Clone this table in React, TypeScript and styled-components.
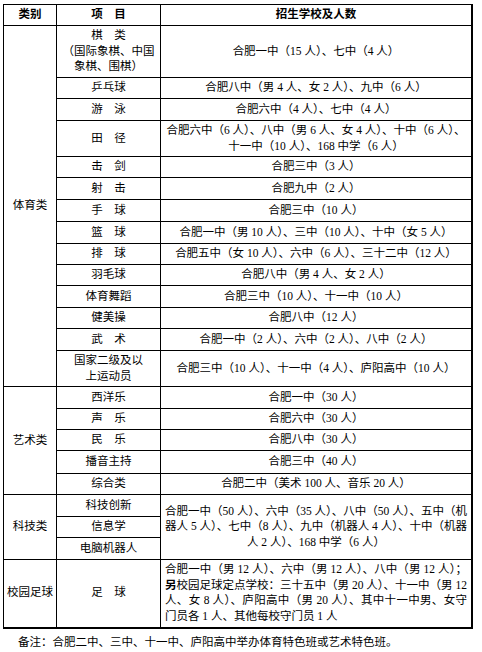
import React from "react"
import styled, { createGlobalStyle } from "styled-components"

const GlobalStyle = createGlobalStyle`
  html, body {
    margin: 0;
    background: #fff;
  }
  body {
    font-family: "Liberation Serif", "Noto Sans CJK SC", serif;
    color: #000;
  }
`

const Page = styled.div`
  padding: 4px 0 0 3px;
  width: 471px;
`

const Table = styled.table`
  width: 470px;
  table-layout: fixed;
  border-collapse: collapse;
  border-right: 2px solid #000;
  border-bottom: 2px solid #000;
  font-size: 11.5px;
  line-height: 15.6px;
`

const Row = styled.tr<{ $h: number }>`
  height: ${p => p.$h}px;
`

const Cell = styled.td<{ $pad?: number }>`
  border: 1px solid #000;
  padding: 0 ${p => p.$pad ?? 4}px;
  text-align: center;
  vertical-align: middle;
`

const HeadCell = styled.th`
  border: 1px solid #000;
  padding: 0;
  text-align: center;
  vertical-align: middle;
  font-weight: 700;
`

const Line = styled.span<{ $fill?: boolean; $bold?: boolean }>`
  display: block;
  white-space: nowrap;
  text-align: ${p => (p.$fill ? "justify" : "center")};
  text-align-last: ${p => (p.$fill ? "justify" : "center")};
`

const Strong = styled.b`
  font-weight: 700;
`

const Note = styled.p`
  margin: 5px 0 0 15px;
  font-size: 11.5px;
  line-height: 16px;
`

type Item = {
  name: string[]
  h: number
  schools?: string[]
  fill?: boolean
}

type Group = {
  label: string
  items: Item[]
}

const groups: Group[] = [
  {
    label: "体育类",
    items: [
      { name: ["棋　类", "（国际象棋、中国", "象棋、围棋）"], h: 52, schools: ["合肥一中（15 人）、七中（4 人）"] },
      { name: ["乒乓球"], h: 21, schools: ["合肥八中（男 4 人、女 2 人）、九中（6 人）"] },
      { name: ["游　泳"], h: 22, schools: ["合肥六中（4 人）、七中（4 人）"] },
      {
        name: ["田　径"],
        h: 36,
        schools: ["合肥六中（6 人）、八中（男 6 人、女 4 人）、十中（6 人）、", "十一中（10 人）、168 中学（6 人）"],
      },
      { name: ["击　剑"], h: 21, schools: ["合肥三中（3 人）"] },
      { name: ["射　击"], h: 22, schools: ["合肥九中（2 人）"] },
      { name: ["手　球"], h: 22, schools: ["合肥三中（10 人）"] },
      { name: ["篮　球"], h: 22, schools: ["合肥一中（男 10 人）、三中（10 人）、十中（女 5 人）"] },
      { name: ["排　球"], h: 21, schools: ["合肥五中（女 10 人）、六中（6 人）、三十二中（12 人）"] },
      { name: ["羽毛球"], h: 21, schools: ["合肥八中（男 4 人、女 2 人）"] },
      { name: ["体育舞蹈"], h: 22, schools: ["合肥三中（10 人）、十一中（10 人）"] },
      { name: ["健美操"], h: 21, schools: ["合肥八中（12 人）"] },
      { name: ["武　术"], h: 22, schools: ["合肥一中（2 人）、六中（2 人）、八中（2 人）"] },
      { name: ["国家二级及以", "上运动员"], h: 36, schools: ["合肥三中（10 人）、十一中（4 人）、庐阳高中（10 人）"] },
    ],
  },
  {
    label: "艺术类",
    items: [
      { name: ["西洋乐"], h: 22, schools: ["合肥一中（30 人）"] },
      { name: ["声　乐"], h: 21, schools: ["合肥六中（30 人）"] },
      { name: ["民　乐"], h: 21, schools: ["合肥八中（30 人）"] },
      { name: ["播音主持"], h: 23, schools: ["合肥三中（40 人）"] },
      { name: ["综合类"], h: 21, schools: ["合肥二中（美术 100 人、音乐 20 人）"] },
    ],
  },
  {
    label: "科技类",
    items: [
      {
        name: ["科技创新"],
        h: 22,
        schools: [
          "合肥一中（50 人）、六中（35 人）、八中（50 人）、五中（机",
          "器人 5 人）、七中（8 人）、九中（机器人 4 人）、十中（机器",
          "人 2 人）、168 中学（6 人）",
        ],
        fill: true,
      },
      { name: ["信息学"], h: 21 },
      { name: ["电脑机器人"], h: 22 },
    ],
  },
]

const SchoolLines = ({ lines, fill }: { lines: string[]; fill?: boolean }) => (
  <>
    {lines.map((l, i) => (
      <Line key={i} $fill={fill && i < lines.length - 1}>
        {l}
      </Line>
    ))}
  </>
)

const App = () => {
  return (
    <Page>
      <GlobalStyle />
      <Table>
        <colgroup>
          <col style={{ width: 53 }} />
          <col style={{ width: 104 }} />
          <col />
        </colgroup>
        <tbody>
          <Row $h={21}>
            <HeadCell>类别</HeadCell>
            <HeadCell>项　目</HeadCell>
            <HeadCell>招生学校及人数</HeadCell>
          </Row>
          {groups.map(g => {
            const span = g.items.length
            // the schools cell of a group spans every item without its own list
            return g.items.map((item, i) => {
              let rows = 1
              if (item.schools) {
                while (i + rows < span && !g.items[i + rows].schools) rows++
              }
              return (
                <Row key={g.label + i} $h={item.h}>
                  {i === 0 && (
                    <Cell rowSpan={span} $pad={0}>
                      {g.label}
                    </Cell>
                  )}
                  <Cell>
                    {item.name.map((n, k) => (
                      <Line key={k}>{n}</Line>
                    ))}
                  </Cell>
                  {item.schools && (
                    <Cell rowSpan={rows}>
                      <SchoolLines lines={item.schools} fill={item.fill} />
                    </Cell>
                  )}
                </Row>
              )
            })
          })}
          <Row $h={68}>
            <Cell $pad={0}>校园足球</Cell>
            <Cell>足　球</Cell>
            <Cell>
              <Line $fill>合肥一中（男 12 人）、六中（男 12 人）、八中（男 12 人）；</Line>
              <Line $fill>
                <Strong>另</Strong>校园足球定点学校：三十五中（男 20 人）、十一中（男 12
              </Line>
              <Line $fill>人、女 8 人）、庐阳高中（男 20 人）、其中十一中男、女守</Line>
              <Line style={{ textAlign: "left", textAlignLast: "left" }}>门员各 1 人、其他每校守门员 1 人</Line>
            </Cell>
          </Row>
        </tbody>
      </Table>
      <Note>备注：合肥二中、三中、十一中、庐阳高中举办体育特色班或艺术特色班。</Note>
    </Page>
  )
}

export default App
